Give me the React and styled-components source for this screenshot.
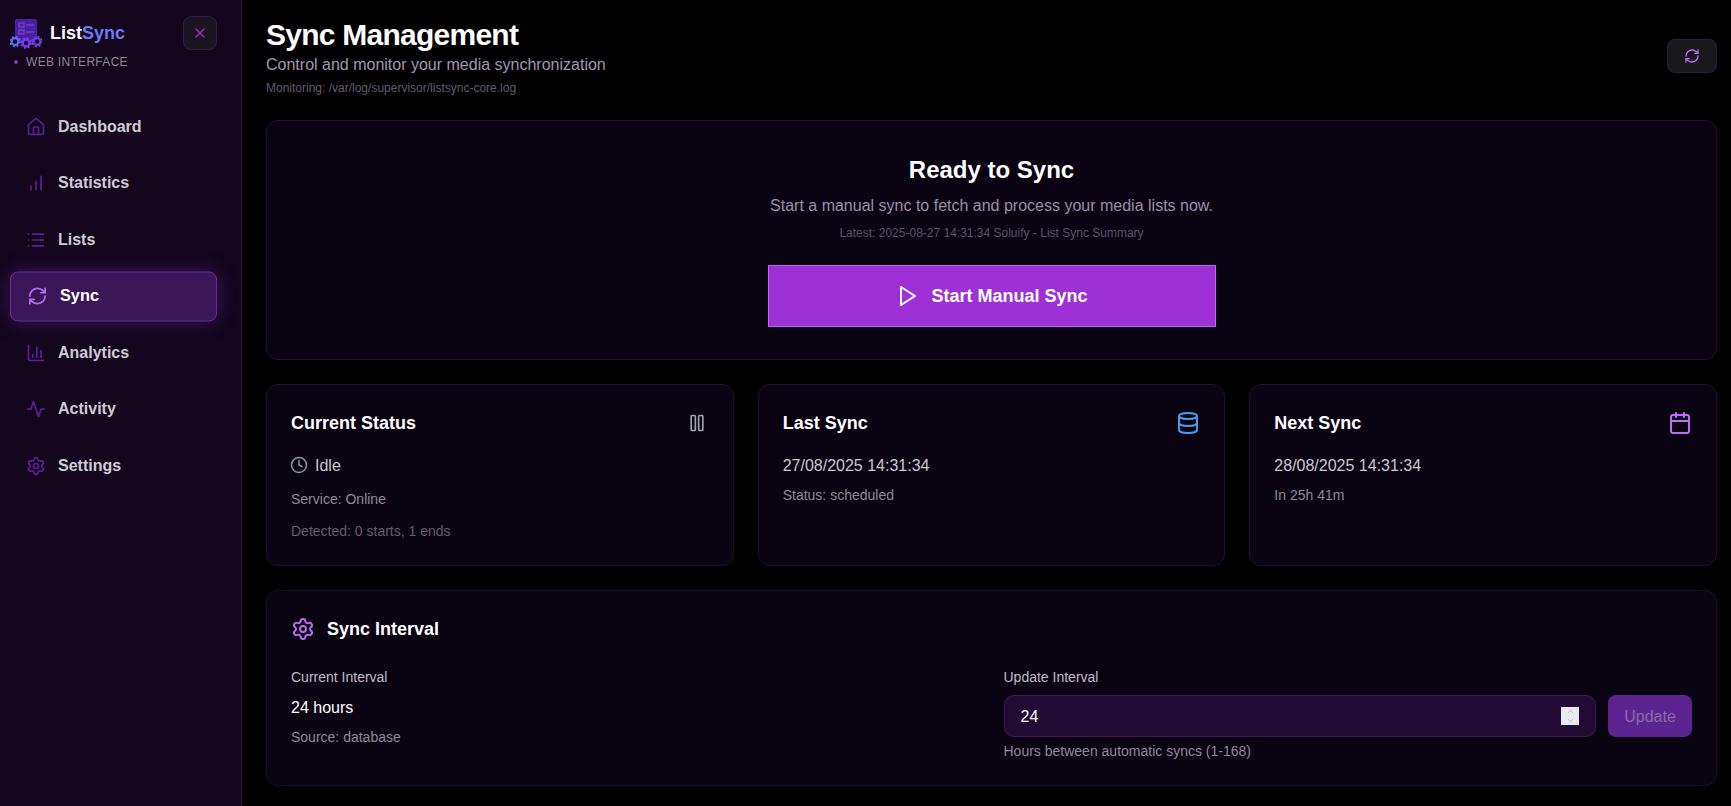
import React from "react";
import styled, { createGlobalStyle } from "styled-components";
import {
  Calendar,
  ChartColumn,
  ChevronDown,
  ChevronUp,
  Clock,
  Database,
  House,
  List,
  Pause,
  RefreshCw,
  Settings,
  X,
} from "lucide-react";

const GlobalStyle = createGlobalStyle`
  html, body {
    margin: 0;
    padding: 0;
    height: 100%;
    background: #000;
    overflow: hidden;
  }
  * {
    box-sizing: border-box;
  }
  body {
    font-family: "Liberation Sans", Arial, sans-serif;
    color: #fff;
  }
`;

const Layout = styled.div`
  display: flex;
  width: 1731px;
  height: 806px;
  background: #000;
`;

const Sidebar = styled.aside`
  flex: 0 0 242px;
  height: 100%;
  background: #13061d;
  border-right: 1px solid #2a1240;
  display: flex;
  flex-direction: column;
`;

const SideHeader = styled.div`
  display: flex;
  justify-content: space-between;
  align-items: flex-start;
  padding: 16px 24px 0 10px;
  height: 102.5px;
`;

const BrandRow = styled.div`
  display: flex;
  align-items: center;
  gap: 8px;
  height: 34px;
`;

const BrandName = styled.div`
  font-size: 18px;
  line-height: 28px;
  font-weight: 700;
  color: #fff;
`;

const BrandAccent = styled.span`
  color: #6f78f6;
`;

const BrandTag = styled.div`
  display: flex;
  align-items: center;
  gap: 8px;
  margin: 4px 0 0 4px;
  font-size: 12px;
  line-height: 16px;
  letter-spacing: 0.3px;
  color: #8f8499;
`;

const TagDot = styled.span`
  width: 4px;
  height: 4px;
  border-radius: 50%;
  background: #7b3fa8;
`;

const CloseButton = styled.button`
  width: 34px;
  height: 34px;
  display: flex;
  align-items: center;
  justify-content: center;
  padding: 0;
  background: #1c1420;
  border: 1px solid #351a4d;
  border-radius: 8px;
  color: #8f2fc9;
`;

const Nav = styled.nav`
  display: flex;
  flex-direction: column;
  gap: 8px;
  padding: 0 26px 0 12px;
`;

const NavItem = styled.a`
  display: flex;
  align-items: center;
  gap: 12px;
  height: 48.5px;
  padding: 0 13px 0 ${(p) => (p.$active ? "16px" : "13px")};
  border: 1px solid ${(p) => (p.$active ? "#6b2a9e" : "transparent")};
  border-radius: 8px;
  font-size: 16px;
  font-weight: 700;
  color: ${(p) => (p.$active ? "#fff" : "#cfcbd5")};
  background: ${(p) => (p.$active ? "#3b1658" : "transparent")};
  box-shadow: ${(p) => (p.$active ? "0 0 20px rgba(125, 45, 190, 0.4)" : "none")};
  transform: ${(p) => (p.$active ? "scale(1.02)" : "none")};

  svg {
    color: ${(p) => (p.$active ? "#b56ef0" : "#5f1f94")};
    flex-shrink: 0;
  }
`;

const Main = styled.main`
  flex: 1;
  min-width: 0;
  padding: 16px 14px 0 24px;
  display: flex;
  flex-direction: column;
  gap: 24px;
`;

const PageHeader = styled.header`
  display: flex;
  justify-content: space-between;
  align-items: center;
`;

const PageTitle = styled.h1`
  margin: 0 0 -1px;
  padding-top: 1px;
  font-size: 30px;
  line-height: 36px;
  font-weight: 700;
  letter-spacing: -0.75px;
  color: #fff;
`;

const PageSub = styled.p`
  margin: 0 0 -1px;
  padding-top: 1px;
  font-size: 16px;
  line-height: 24px;
  color: #a396b3;
`;

const PageMeta = styled.p`
  margin: 4px 0 0;
  font-size: 12px;
  line-height: 16px;
  color: #645a70;
`;

const RefreshButton = styled.button`
  width: 50px;
  height: 34px;
  display: flex;
  align-items: center;
  justify-content: center;
  padding: 0;
  background: #19181b;
  border: 1px solid #351a4d;
  border-radius: 8px;
  color: #b56ef0;
`;

const Card = styled.section`
  background: #0a0412;
  border: 1px solid #1e1030;
  border-radius: 12px;
  padding: ${(p) => p.$padding || "24px"};
`;

const Hero = styled(Card)`
  display: flex;
  flex-direction: column;
  align-items: center;
  text-align: center;
`;

const HeroTitle = styled.h2`
  margin: 0 0 -1px;
  padding-top: 1px;
  font-size: 24px;
  line-height: 32px;
  font-weight: 700;
`;

const HeroText = styled.p`
  margin: 8px 0 -1px;
  padding-top: 1px;
  font-size: 16px;
  line-height: 24px;
  color: #9a8ea8;
`;

const HeroMeta = styled.p`
  margin: 8px 0 0;
  font-size: 12px;
  line-height: 16px;
  color: #5c5266;
`;

const StartButton = styled.button`
  margin-top: 24px;
  width: 448px;
  height: 62px;
  display: flex;
  align-items: center;
  justify-content: center;
  gap: 11px;
  padding: 0 0 0 1px;
  background: #9d31d6;
  border: 1px solid #b96bea;
  border-radius: 0;
  color: #fff;
  font-family: inherit;
  font-size: 18px;
  font-weight: 700;
`;

const StatGrid = styled.div`
  display: grid;
  grid-template-columns: repeat(3, 1fr);
  gap: 24px;
`;

const StatHead = styled.div`
  display: flex;
  justify-content: space-between;
  align-items: center;
  height: 28px;
  margin-bottom: 16px;

  svg {
    color: ${(p) => p.$iconColor};
  }
`;

const PauseIcon = styled(Pause)`
  margin-right: 2px;
`;

const CardTitle = styled.h3`
  margin: 0;
  font-size: 18px;
  line-height: 28px;
  font-weight: 700;
`;

const StatValue = styled.div`
  display: flex;
  align-items: center;
  gap: 8px;
  height: 24px;
  padding-top: 1px;
  font-size: 16px;
  line-height: 24px;
  color: #cbc7d0;
`;

const StatusClock = styled(Clock)`
  color: #8f95a3;
  margin: -1px -1px 0 -1px;
`;

const StatNote = styled.div`
  margin-top: ${(p) => p.$gap || 8}px;
  font-size: 14px;
  line-height: 20px;
  color: ${(p) => (p.$dim ? "#635c6b" : "#8f8996")};
`;

const IntervalHead = styled.div`
  display: flex;
  align-items: center;
  gap: 12px;
  margin-bottom: 24px;

  svg {
    color: #b56ef0;
  }
`;

const IntervalGrid = styled.div`
  display: grid;
  grid-template-columns: 1fr 1fr;
  gap: 24px;
`;

const FieldLabel = styled.div`
  font-size: 14px;
  line-height: 20px;
  color: #c0bbc6;
  margin-bottom: 8px;
`;

const IntervalValue = styled.div`
  height: 24px;
  padding-top: 1px;
  font-size: 16px;
  line-height: 24px;
  color: #fff;
`;

const InputRow = styled.div`
  display: flex;
  gap: 12px;
`;

const InputWrap = styled.div`
  position: relative;
  flex: 1;
  min-width: 0;
`;

const NumberInput = styled.input`
  width: 100%;
  height: 42px;
  padding: 2px 16px 0;
  background: #220c35;
  border: 1px solid #3a1a55;
  border-radius: 10px;
  color: #fff;
  font-family: inherit;
  font-size: 16px;
  outline: none;
  appearance: textfield;

  &::-webkit-inner-spin-button {
    appearance: none;
    margin: 0;
  }
`;

const Spinner = styled.div`
  position: absolute;
  top: 12px;
  right: 17px;
  width: 18px;
  height: 18px;
  display: flex;
  flex-direction: column;
  align-items: center;
  justify-content: center;
  background: #e9e9ef;
  color: #a9a9b2;
`;

const UpdateButton = styled.button`
  width: 84px;
  height: 42px;
  padding: 2px 0 0;
  background: #5c2490;
  border: none;
  border-radius: 8px;
  color: #8a6aa6;
  font-family: inherit;
  font-size: 16px;
`;

const FieldHint = styled.div`
  margin-top: 4px;
  font-size: 14px;
  line-height: 20px;
  color: #8f8996;
`;

function Logo() {
  const gears = [
    { cx: 15, cy: 40.5, color: "#5f68f0" },
    { cx: 37, cy: 40.5, color: "#6d3ae0" },
    { cx: 26, cy: 42, color: "#7c3aed" },
  ];
  return (
    <svg width="32" height="34" viewBox="10 15 32 34" fill="none">
      <rect x="15" y="18" width="22" height="24" rx="2" fill="#4a1fa6" />
      <rect x="19" y="22" width="5" height="4" stroke="#7a55cf" strokeWidth="1" />
      <rect x="19" y="29" width="5" height="4" stroke="#7a55cf" strokeWidth="1" />
      <path d="M26 24h8M26 31h8" stroke="#7a55cf" strokeWidth="1" />
      {gears.map((g) => (
        <g key={g.cx} stroke={g.color}>
          <circle cx={g.cx} cy={g.cy} r="3.4" strokeWidth="2.4" fill="#13061d" />
          <circle cx={g.cx} cy={g.cy} r="5" strokeWidth="1.6" strokeDasharray="2 1.93" />
        </g>
      ))}
    </svg>
  );
}

// bars of the statistics entry, three plain lines
function BarsIcon() {
  return (
    <svg width="20" height="20" viewBox="0 0 24 24" fill="none" stroke="currentColor" strokeWidth="2" strokeLinecap="round">
      <path d="M12 20V10M18 20V4M6 20v-4" />
    </svg>
  );
}

function ActivityLine() {
  return (
    <svg width="20" height="20" viewBox="0 0 24 24" fill="none" stroke="currentColor" strokeWidth="2" strokeLinecap="round" strokeLinejoin="round">
      <path d="M22 12h-4l-3 9L9 3l-3 9H2" />
    </svg>
  );
}

function PlayIcon() {
  return (
    <svg width="24" height="24" viewBox="0 0 24 24" fill="none" stroke="currentColor" strokeWidth="2" strokeLinecap="round" strokeLinejoin="round">
      <polygon points="5 3 19 12 5 21 5 3" />
    </svg>
  );
}

const navItems = [
  { label: "Dashboard", icon: <House size={20} /> },
  { label: "Statistics", icon: <BarsIcon /> },
  { label: "Lists", icon: <List size={20} /> },
  { label: "Sync", icon: <RefreshCw size={20} />, active: true },
  { label: "Analytics", icon: <ChartColumn size={20} /> },
  { label: "Activity", icon: <ActivityLine /> },
  { label: "Settings", icon: <Settings size={20} /> },
];

export default function App() {
  return (
    <Layout>
      <GlobalStyle />
      <Sidebar>
        <SideHeader>
          <div>
            <BrandRow>
              <Logo />
              <BrandName>
                List<BrandAccent>Sync</BrandAccent>
              </BrandName>
            </BrandRow>
            <BrandTag>
              <TagDot />
              WEB INTERFACE
            </BrandTag>
          </div>
          <CloseButton>
            <X size={16} />
          </CloseButton>
        </SideHeader>
        <Nav>
          {navItems.map((item) => (
            <NavItem key={item.label} $active={item.active}>
              {item.icon}
              {item.label}
            </NavItem>
          ))}
        </Nav>
      </Sidebar>

      <Main>
        <PageHeader>
          <div>
            <PageTitle>Sync Management</PageTitle>
            <PageSub>Control and monitor your media synchronization</PageSub>
            <PageMeta>Monitoring: /var/log/supervisor/listsync-core.log</PageMeta>
          </div>
          <RefreshButton>
            <RefreshCw size={16} />
          </RefreshButton>
        </PageHeader>

        <Hero $padding="32px">
          <HeroTitle>Ready to Sync</HeroTitle>
          <HeroText>Start a manual sync to fetch and process your media lists now.</HeroText>
          <HeroMeta>Latest: 2025-08-27 14:31:34 Soluify - List Sync Summary</HeroMeta>
          <StartButton>
            <PlayIcon />
            Start Manual Sync
          </StartButton>
        </Hero>

        <StatGrid>
          <Card>
            <StatHead $iconColor="#9ca3af">
              <CardTitle>Current Status</CardTitle>
              <PauseIcon size={20} />
            </StatHead>
            <StatValue>
              <StatusClock size={18} />
              Idle
            </StatValue>
            <StatNote $gap={12}>Service: Online</StatNote>
            <StatNote $gap={12} $dim>
              Detected: 0 starts, 1 ends
            </StatNote>
          </Card>
          <Card>
            <StatHead $iconColor="#4a9cf0">
              <CardTitle>Last Sync</CardTitle>
              <Database size={24} />
            </StatHead>
            <StatValue>27/08/2025 14:31:34</StatValue>
            <StatNote>Status: scheduled</StatNote>
          </Card>
          <Card>
            <StatHead $iconColor="#bf6df8">
              <CardTitle>Next Sync</CardTitle>
              <Calendar size={24} />
            </StatHead>
            <StatValue>28/08/2025 14:31:34</StatValue>
            <StatNote>In 25h 41m</StatNote>
          </Card>
        </StatGrid>

        <Card>
          <IntervalHead>
            <Settings size={24} />
            <CardTitle>Sync Interval</CardTitle>
          </IntervalHead>
          <IntervalGrid>
            <div>
              <FieldLabel>Current Interval</FieldLabel>
              <IntervalValue>24 hours</IntervalValue>
              <StatNote>Source: database</StatNote>
            </div>
            <div>
              <FieldLabel>Update Interval</FieldLabel>
              <InputRow>
                <InputWrap>
                  <NumberInput type="number" defaultValue="24" min="1" max="168" />
                  <Spinner>
                    <ChevronUp size={9} strokeWidth={2} />
                    <ChevronDown size={9} strokeWidth={2} />
                  </Spinner>
                </InputWrap>
                <UpdateButton>Update</UpdateButton>
              </InputRow>
              <FieldHint>Hours between automatic syncs (1-168)</FieldHint>
            </div>
          </IntervalGrid>
        </Card>
      </Main>
    </Layout>
  );
}
